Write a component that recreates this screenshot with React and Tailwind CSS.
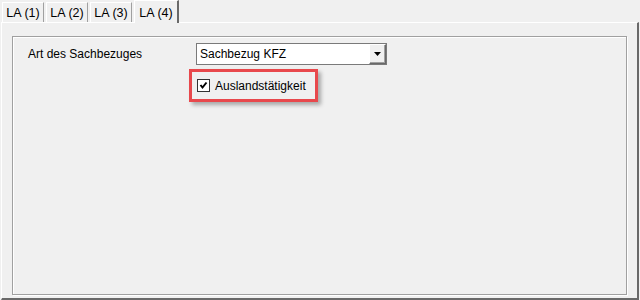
import React from 'react';

const font = { fontFamily: '"Liberation Sans", Arial, sans-serif' };

function Tab({ label, active }) {
  if (active) {
    return (
      <div className="relative z-10 -mb-px flex h-[23px] w-[45px] items-start justify-center border-l border-t border-white border-r-2 border-r-[#696969] bg-[#f0f0f0] pt-[3px] text-[12.5px] text-black">
        {label}
      </div>
    );
  }
  return (
    <div className="flex h-[20px] w-[42px] items-center justify-center border-l border-t border-white border-r border-r-[#a0a0a0] bg-[#f0f0f0] pt-px text-[12.5px] text-black">
      {label}
    </div>
  );
}

export default function App() {
  return (
    <div className="flex h-[300px] w-[640px] flex-col bg-[#f0f0f0]" style={font}>
      <div className="flex h-[22px] items-end gap-[2px] pl-[2px]">
        <Tab label="LA (1)" />
        <Tab label="LA (2)" />
        <Tab label="LA (3)" />
        <Tab label="LA (4)" active />
      </div>

      <div className="ml-px mr-px flex flex-1 flex-col border-l border-t border-white border-r-2 border-b-2 border-r-[#696969] border-b-[#696969] pb-[3px] pl-[10px] pr-[10px] pt-[13px]">
        <div className="flex flex-1 flex-col border border-[#a0a0a0] shadow-[1px_1px_0_#ffffff,inset_1px_1px_0_#ffffff]">
          <div className="flex items-center pl-[15px] pt-[6px]">
            <div className="w-[168px] text-[12px] text-black">Art des Sachbezuges</div>
            <div className="flex h-[22px] w-[191px] items-center border border-[#7a7a7a] bg-white">
              <div className="flex-1 pl-[3px] text-[12px] text-black">Sachbezug KFZ</div>
              <div className="flex h-[20px] w-[17px] items-center justify-center border-l border-t border-white border-r border-b border-r-[#696969] border-b-[#696969] bg-[#f0f0f0] shadow-[inset_-1px_-1px_0_#a0a0a0]">
                <svg width="7" height="4" viewBox="0 0 7 4">
                  <path d="M0 0h7L3.5 4z" fill="#000" />
                </svg>
              </div>
            </div>
          </div>

          <div className="pl-[176px] pt-[4px]">
            <div className="inline-flex h-[33px] items-center gap-[5px] border-[3px] border-[#e8484c] pl-[5px] pr-[9px] shadow-[3px_3px_4px_rgba(0,0,0,0.3)]">
              <svg width="13" height="13" viewBox="0 0 13 13">
                <rect x="0.5" y="0.5" width="12" height="12" fill="#fff" stroke="#333" />
                <path d="M3.5 6l2 2.5L9.5 3.5" fill="none" stroke="#000" strokeWidth="2" />
              </svg>
              <span className="text-[12px] text-black">Auslandstätigkeit</span>
            </div>
          </div>
        </div>
      </div>
    </div>
  );
}
